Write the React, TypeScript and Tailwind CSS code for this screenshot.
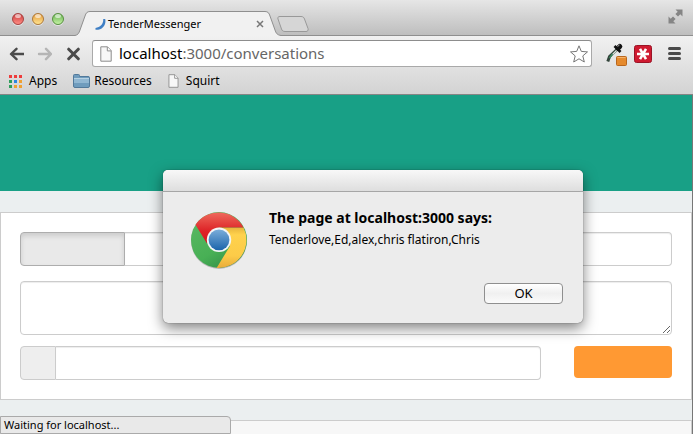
import React from "react";

function TrafficLight({ label, className }: { label: string; className: string }) {
  return (
    <button
      type="button"
      aria-label={label}
      className={`relative size-3 overflow-hidden rounded-full border shadow-[0_1px_0_rgba(255,255,255,0.5)] ${className}`}
    >
      <span className="absolute inset-x-[2px] top-0 h-1 rounded-full bg-white/60" />
    </button>
  );
}

function PageIcon({ className }: { className: string }) {
  return (
    <svg viewBox="0 0 12 16" className={className} aria-hidden="true">
      <path d="M.8.8h6.700l3.700 3.800v10.600H.8z" fill="#f7f7f7" stroke="#8c8c8c" />
      <path d="M7.300.9v4h3.800" fill="#fff" stroke="#8c8c8c" />
    </svg>
  );
}

function ChromeLogo() {
  return (
    <svg viewBox="0 0 58 60" className="h-[60px] w-[58px] shrink-0" aria-hidden="true">
      <defs>
        <linearGradient id="red" x1="0" y1="0" x2="0" y2="1">
          <stop offset="0" stopColor="#ee6a5c" />
          <stop offset="0.6" stopColor="#dd2226" />
          <stop offset="1" stopColor="#d8151e" />
        </linearGradient>
        <linearGradient id="green" x1="0" y1="0" x2="0.6" y2="1">
          <stop offset="0" stopColor="#5cb965" />
          <stop offset="0.7" stopColor="#48b055" />
          <stop offset="1" stopColor="#35924a" />
        </linearGradient>
        <linearGradient id="yellow" x1="0" y1="0" x2="0" y2="1">
          <stop offset="0" stopColor="#e7b43c" />
          <stop offset="0.18" stopColor="#ffd24d" />
          <stop offset="0.7" stopColor="#fccb48" />
          <stop offset="1" stopColor="#e9ab3b" />
        </linearGradient>
        <linearGradient id="blue" x1="0" y1="0" x2="0" y2="1">
          <stop offset="0" stopColor="#7badda" />
          <stop offset="1" stopColor="#1b65ab" />
        </linearGradient>
      </defs>
      <ellipse cx="29" cy="31" rx="28" ry="28" fill="#000" opacity="0.22" />
      <circle cx="29" cy="30" r="28" fill="url(#green)" />
      <path d="M29 17.5H53.5A28 28 0 0 1 26.6 57.9L40 36Z" fill="url(#yellow)" />
      <path d="M5.5 14.7A28 28 0 0 1 53.5 17.5H29L17 33.5Z" fill="url(#red)" />
      <circle cx="29" cy="29.8" r="12.2" fill="#f3f5f6" />
      <circle cx="29" cy="29.8" r="10.4" fill="url(#blue)" />
    </svg>
  );
}

function TabStrip() {
  return (
    <div className="flex h-9 items-end border-b border-[#8f8f8f] bg-gradient-to-b from-[#e6e6e6] to-[#bebebe] pr-[10px]">
      <div className="flex w-[75px] gap-2 self-start pt-[13px] pl-3">
        <TrafficLight label="Close window" className="border-[#a7413f] bg-gradient-to-b from-[#c8383b] to-[#ff8b84]" />
        <TrafficLight label="Minimize window" className="border-[#ae7838] bg-gradient-to-b from-[#e29a39] to-[#ffe48e]" />
        <TrafficLight label="Zoom window" className="border-[#57903f] bg-gradient-to-b from-[#68b252] to-[#c3f1a2]" />
      </div>
      <div className="relative -mb-px h-[25px] w-[206px]">
        <svg viewBox="0 0 206 25" className="absolute inset-0 h-full w-full" aria-hidden="true">
          <path d="M0 25v-.5C3 24 4 22 5 19L10 5C11 2 12 .5 15 .5H190c3 0 4 1.500 5 4.500l5 14c1 3 2 5 6 5.500v.5z" fill="#f1f1f1" />
          <path d="M0 24.500C3 24 4 22 5 19L10 5C11 2 12 .5 15 .5H190c3 0 4 1.500 5 4.500l5 14c1 3 2 5 6 5.500" fill="none" stroke="#8f8f8f" />
        </svg>
        <div className="relative flex h-full items-center pl-5">
          <svg viewBox="0 0 12 12" className="mr-px h-3 w-3" aria-hidden="true">
            <path d="M8.200 1L10.200 1C11.500 7 7.500 12.200 0.500 11.800L0.500 10C5.500 9.500 8.600 6 8.200 1z" fill="#3f7fc4" />
          </svg>
          <span className="text-[11px] leading-4 text-black">TenderMessenger</span>
          <button type="button" aria-label="Close tab" className="mr-[17px] ml-auto size-2">
            <svg viewBox="0 0 8 8" className="size-2" aria-hidden="true">
              <path d="M1 1l6 6M7 1L1 7" stroke="#777" strokeWidth="1.500" />
            </svg>
          </button>
        </div>
      </div>
      <button type="button" aria-label="New tab" className="mb-[3px] -ml-1 h-4 w-8">
        <svg viewBox="0 0 32 16" className="h-4 w-8" aria-hidden="true">
          <path d="M3 .5h21c2 0 3 1 3.500 2.500l3.500 9.500c.5 2-.5 3-2 3H8c-2 0-3-1-3.500-2.500L1 3C.500 1.500 1 .5 3 .5z" fill="#d6d6d6" stroke="#999" />
        </svg>
      </button>
      <button type="button" aria-label="Full screen" className="mb-[11px] ml-auto size-[15px]">
        <svg viewBox="0 0 15 15" className="size-[15px]" fill="#858585" aria-hidden="true">
          <path d="M7.500 .5h7v7l-2.200-2.200-2.300 2.300-2.600-2.600 2.300-2.300zM.5 7.500l2.200 2.200L5 7.400l2.600 2.600-2.300 2.300 2.200 2.200h-7z" />
        </svg>
      </button>
    </div>
  );
}

function Toolbar() {
  return (
    <div className="flex h-[35px] items-center pr-3 pl-2">
      <div className="flex gap-3 pr-3 text-[#4b4b4b]">
        <button type="button" aria-label="Back" className="size-4">
          <svg viewBox="0 0 16 16" className="size-4" fill="none" stroke="currentColor" strokeWidth="2.400" strokeLinecap="round" strokeLinejoin="round" aria-hidden="true">
            <path d="M8.500 2.800L3 8l5.500 5.200M3.500 8H15.500" />
          </svg>
        </button>
        <button type="button" aria-label="Forward" className="size-4 text-[#b5b5b5]">
          <svg viewBox="0 0 16 16" className="size-4" fill="none" stroke="currentColor" strokeWidth="2.400" strokeLinecap="round" strokeLinejoin="round" aria-hidden="true">
            <path d="M10 2.800L15 8l-5 5.200M14.500 8H3" />
          </svg>
        </button>
        <button type="button" aria-label="Stop" className="size-4">
          <svg viewBox="0 0 16 16" className="size-4" fill="none" stroke="currentColor" strokeWidth="3" strokeLinecap="round" aria-hidden="true">
            <path d="M4.700 3.200l9.600 9.600M14.300 3.200l-9.600 9.600" />
          </svg>
        </button>
      </div>
      <div className="flex h-[27px] min-w-0 flex-1 items-center rounded-[3px] border border-[#a9a9a9] border-t-[#8d8d8d] bg-white pr-[3px] pl-[7px]">
        <PageIcon className="mr-[7px] h-4 w-3" />
        <button type="button" className="flex-1 truncate pb-[2px] text-left text-[15px] leading-5 text-[#666]">
          <span className="text-black">localhost</span>:3000/conversations
        </button>
        <button type="button" aria-label="Bookmark this page" className="size-[18px]">
          <svg viewBox="0 0 18 18" className="size-[18px]" aria-hidden="true">
            <path d="M9 .8l2.300 5.600 6.200.5-4.700 4 1.500 6.100L9 13.800l-5.300 3.200 1.500-6.100L.5 6.900l6.200-.5z" fill="#fff" stroke="#777" strokeLinejoin="round" />
          </svg>
        </button>
      </div>
      <button type="button" aria-label="Color picker" className="ml-[14px] h-6 w-6">
        <svg viewBox="0 0 24 24" className="h-6 w-6" aria-hidden="true">
          <path d="M11.500 7L3.500 14.500L1.800 19.500" fill="none" stroke="#33443b" strokeWidth="3" />
          <path d="M11 8l-5 5" stroke="#d9e3dc" strokeWidth="1.300" />
          <path d="M6.500 12l-3 4" stroke="#38875e" strokeWidth="1.600" />
          <path d="M8.500 4l6 6" stroke="#111" strokeWidth="2.600" />
          <path d="M12 6.300l1.800-1.800" stroke="#111" strokeWidth="5" strokeLinecap="round" />
          <path d="M11.500 4.500l2-1.500" stroke="#aaa" />
          <rect x="10.500" y="14.500" width="10" height="9" rx="1" fill="#e58a2d" stroke="#b9661c" />
          <path d="M11.500 15.500h8" stroke="#f5b269" />
        </svg>
      </button>
      <button type="button" aria-label="Password manager" className="ml-1 size-[18px]">
        <svg viewBox="0 0 18 18" className="size-[18px]" aria-hidden="true">
          <rect x="0.500" y="0.500" width="17" height="17" rx="2" fill="#cf1a30" stroke="#9a1426" />
          <path d="M3 9h12M6 3.800l6 10.400M12 3.800l-6 10.400" stroke="#fff" strokeWidth="2.600" />
        </svg>
      </button>
      <button type="button" aria-label="Menu" className="ml-4 flex h-[13px] w-[13px] flex-col justify-between">
        <span className="h-[3px] w-full rounded-sm bg-[#4a4a4a]" />
        <span className="h-[3px] w-full rounded-sm bg-[#4a4a4a]" />
        <span className="h-[3px] w-full rounded-sm bg-[#4a4a4a]" />
      </button>
    </div>
  );
}

function BookmarksBar() {
  return (
    <nav aria-label="Bookmarks" className="flex h-[23px] items-center gap-4 pb-[3px] pl-[9px] text-[12px] leading-4 text-black">
      <a href="#apps" className="flex items-center gap-[7px]">
        <svg viewBox="0 0 13 13" className="size-[13px]" aria-hidden="true">
          <path d="M0 0h3v3H0zM5 0h3v3H5zM10 0h3v3h-3z" fill="#ee3c3c" />
          <path d="M0 5h3v3H0zM0 10h3v3H0z" fill="#2f9e5b" />
          <path d="M5 5h3v3H5z" fill="#2d86e0" />
          <path d="M5 10h3v3H5zM10 5h3v3h-3zM10 10h3v3h-3z" fill="#f0a030" />
        </svg>
        Apps
      </a>
      <a href="#resources" className="flex items-center gap-1">
        <svg viewBox="0 0 17 14" className="h-[14px] w-[17px]" aria-hidden="true">
          <path d="M.5 3V1.500q0-1 1-1h4q1 0 1 1v1h8.500q1.500 0 1.500 1V12q0 1.500-1.500 1.500H2Q.5 13.500.5 12z" fill="#6f9cbd" stroke="#52799a" />
          <path d="M1 5h15v4H1z" fill="#91b7d2" />
          <path d="M1 4.500h15" stroke="#b7d1e2" />
        </svg>
        Resources
      </a>
      <a href="#squirt" className="flex items-center gap-[7px]">
        <PageIcon className="h-[14px] w-[11px]" />
        Squirt
      </a>
    </nav>
  );
}

function ConversationForm() {
  return (
    <form className="border border-[#ccc] bg-white px-[19px] pt-[19px] pb-[19px]">
      <div className="flex h-[34px]">
        <button
          type="button"
          aria-label="Choose recipients"
          className="w-[105px] rounded-l border border-[#adadad] bg-[#e9e9e9] shadow-[inset_0_3px_5px_rgba(0,0,0,0.125)]"
        />
        <input
          type="text"
          aria-label="Recipients"
          className="min-w-0 flex-1 rounded-r border border-l-0 border-[#ccc] bg-white px-3 text-sm outline-none shadow-[inset_0_1px_1px_rgba(0,0,0,0.075)]"
        />
      </div>
      <textarea
        aria-label="Message"
        className="mt-[15px] block h-[54px] w-full resize rounded border border-[#ccc] bg-white px-3 py-2 text-sm outline-none shadow-[inset_0_1px_1px_rgba(0,0,0,0.075)]"
      />
      <div className="mt-[11px] flex items-start gap-[33px]">
        <div className="flex h-[34px] min-w-0 flex-1">
          <span className="w-9 rounded-l border border-[#ccc] bg-[#eee]" />
          <input
            type="text"
            aria-label="Subject"
            className="min-w-0 flex-1 rounded-r border border-l-0 border-[#ccc] bg-white px-3 text-sm outline-none shadow-[inset_0_1px_1px_rgba(0,0,0,0.075)]"
          />
        </div>
        <button type="submit" aria-label="Send" className="h-8 w-[98px] rounded bg-[#ff9933]" />
      </div>
    </form>
  );
}

function AlertDialog() {
  return (
    <div
      role="alertdialog"
      aria-labelledby="alert-title"
      aria-describedby="alert-message"
      className="absolute top-[170px] left-[163px] w-[420px] rounded-[5px] bg-[#ececec] text-black shadow-[0_0_1px_rgba(0,0,0,0.7),0_5px_14px_rgba(0,0,0,0.5)]"
    >
      <div className="h-[22px] rounded-t-[5px] border-b border-[#a6a6a6] bg-gradient-to-b from-[#f8f8f8] to-[#dedede]" />
      <div className="flex gap-[21px] pt-[18px] pr-5 pb-[19px] pl-[27px]">
        <ChromeLogo />
        <div className="flex min-w-0 flex-1 flex-col">
          <h1 id="alert-title" className="text-[14px] leading-4 font-bold">
            The page at localhost:3000 says:
          </h1>
          <p id="alert-message" className="mt-[6px] text-[12px] leading-4">
            Tenderlove,Ed,alex,chris flatiron,Chris
          </p>
          <button
            type="button"
            className="mt-[35px] h-[21px] w-[79px] self-end rounded border border-[#8f8f8f] bg-gradient-to-b from-white via-[#f0f0f0] to-[#fbfbfb] pb-px text-[13px] leading-4"
          >
            OK
          </button>
        </div>
      </div>
    </div>
  );
}

export default function App() {
  return (
    <div className="relative flex h-screen flex-col overflow-hidden bg-[#ebeff0] font-['Noto_Sans','Lucida_Grande',sans-serif]">
      <header>
        <TabStrip />
        <div className="border-b border-[#858585] bg-gradient-to-b from-[#f1f1f1] to-[#d3d3d3]">
          <Toolbar />
          <BookmarksBar />
        </div>
      </header>
      <main className="flex min-h-0 flex-1 flex-col border-r border-[#777]">
        <div className="h-24 shrink-0 bg-[#18a086]" />
        <div className="mt-[21px]">
          <ConversationForm />
        </div>
        <div className="mt-5 flex-1 border border-b-0 border-[#ccc] bg-[#f7f7f7]" />
      </main>
      <AlertDialog />
      <div
        role="status"
        className="absolute bottom-0 left-0 h-[18px] w-[231px] rounded-tr border border-[#aaa] bg-[#e9e9e9] pl-[3px] text-[11px] leading-4 text-black"
      >
        Waiting for localhost...
      </div>
    </div>
  );
}
